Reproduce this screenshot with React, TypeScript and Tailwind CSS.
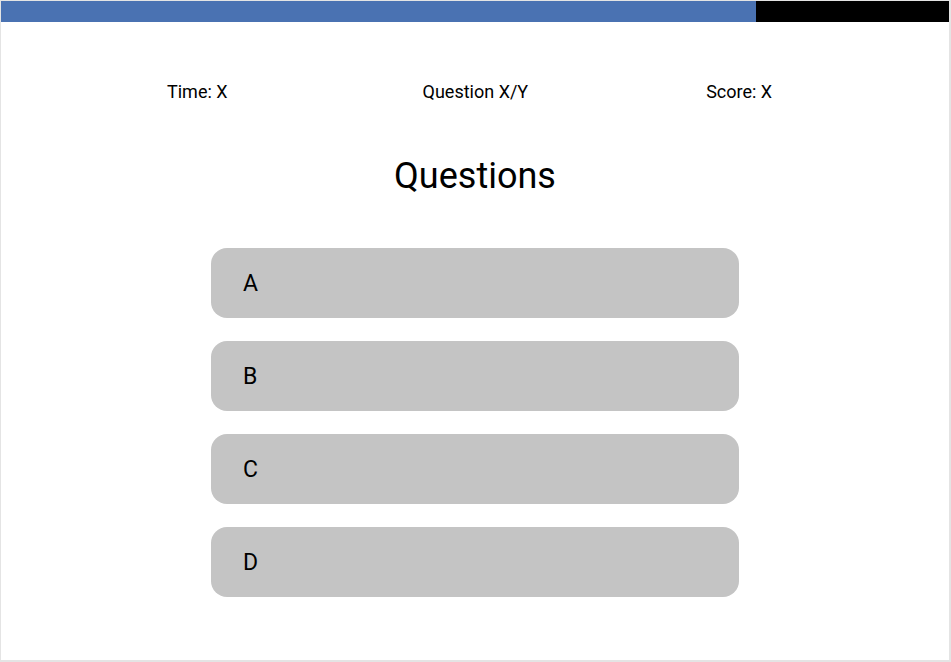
const OPTIONS = ["A", "B", "C", "D"];

export default function App() {
  return (
    <div className="w-[951px] h-[662px] bg-white border-l border-t border-r-2 border-b-2 border-[#e4e4e4] font-['Roboto',sans-serif] text-black overflow-hidden">
      {/* progress bar */}
      <div className="flex h-[21px]">
        <div className="w-[755px] bg-[#4a72b2]" />
        <div className="flex-1 bg-black" />
      </div>

      <div className="flex mt-[59px] pl-[166px] text-[18px] leading-[21px]">
        <span>Time: X</span>
        <span className="ml-[195px]">Question X/Y</span>
        <span className="ml-[178px]">Score: X</span>
      </div>

      <h1 className="mt-[53px] text-center text-[36px] leading-[42px]">Questions</h1>

      <div className="mt-[51px] ml-[210px] w-[528px] flex flex-col gap-[23px]">
        {OPTIONS.map((opt) => (
          <button
            key={opt}
            className="h-[70px] rounded-[16px] bg-[#c4c4c4] flex items-center pl-8 pt-[2px] text-[23px] text-left"
          >
            {opt}
          </button>
        ))}
      </div>
    </div>
  );
}
